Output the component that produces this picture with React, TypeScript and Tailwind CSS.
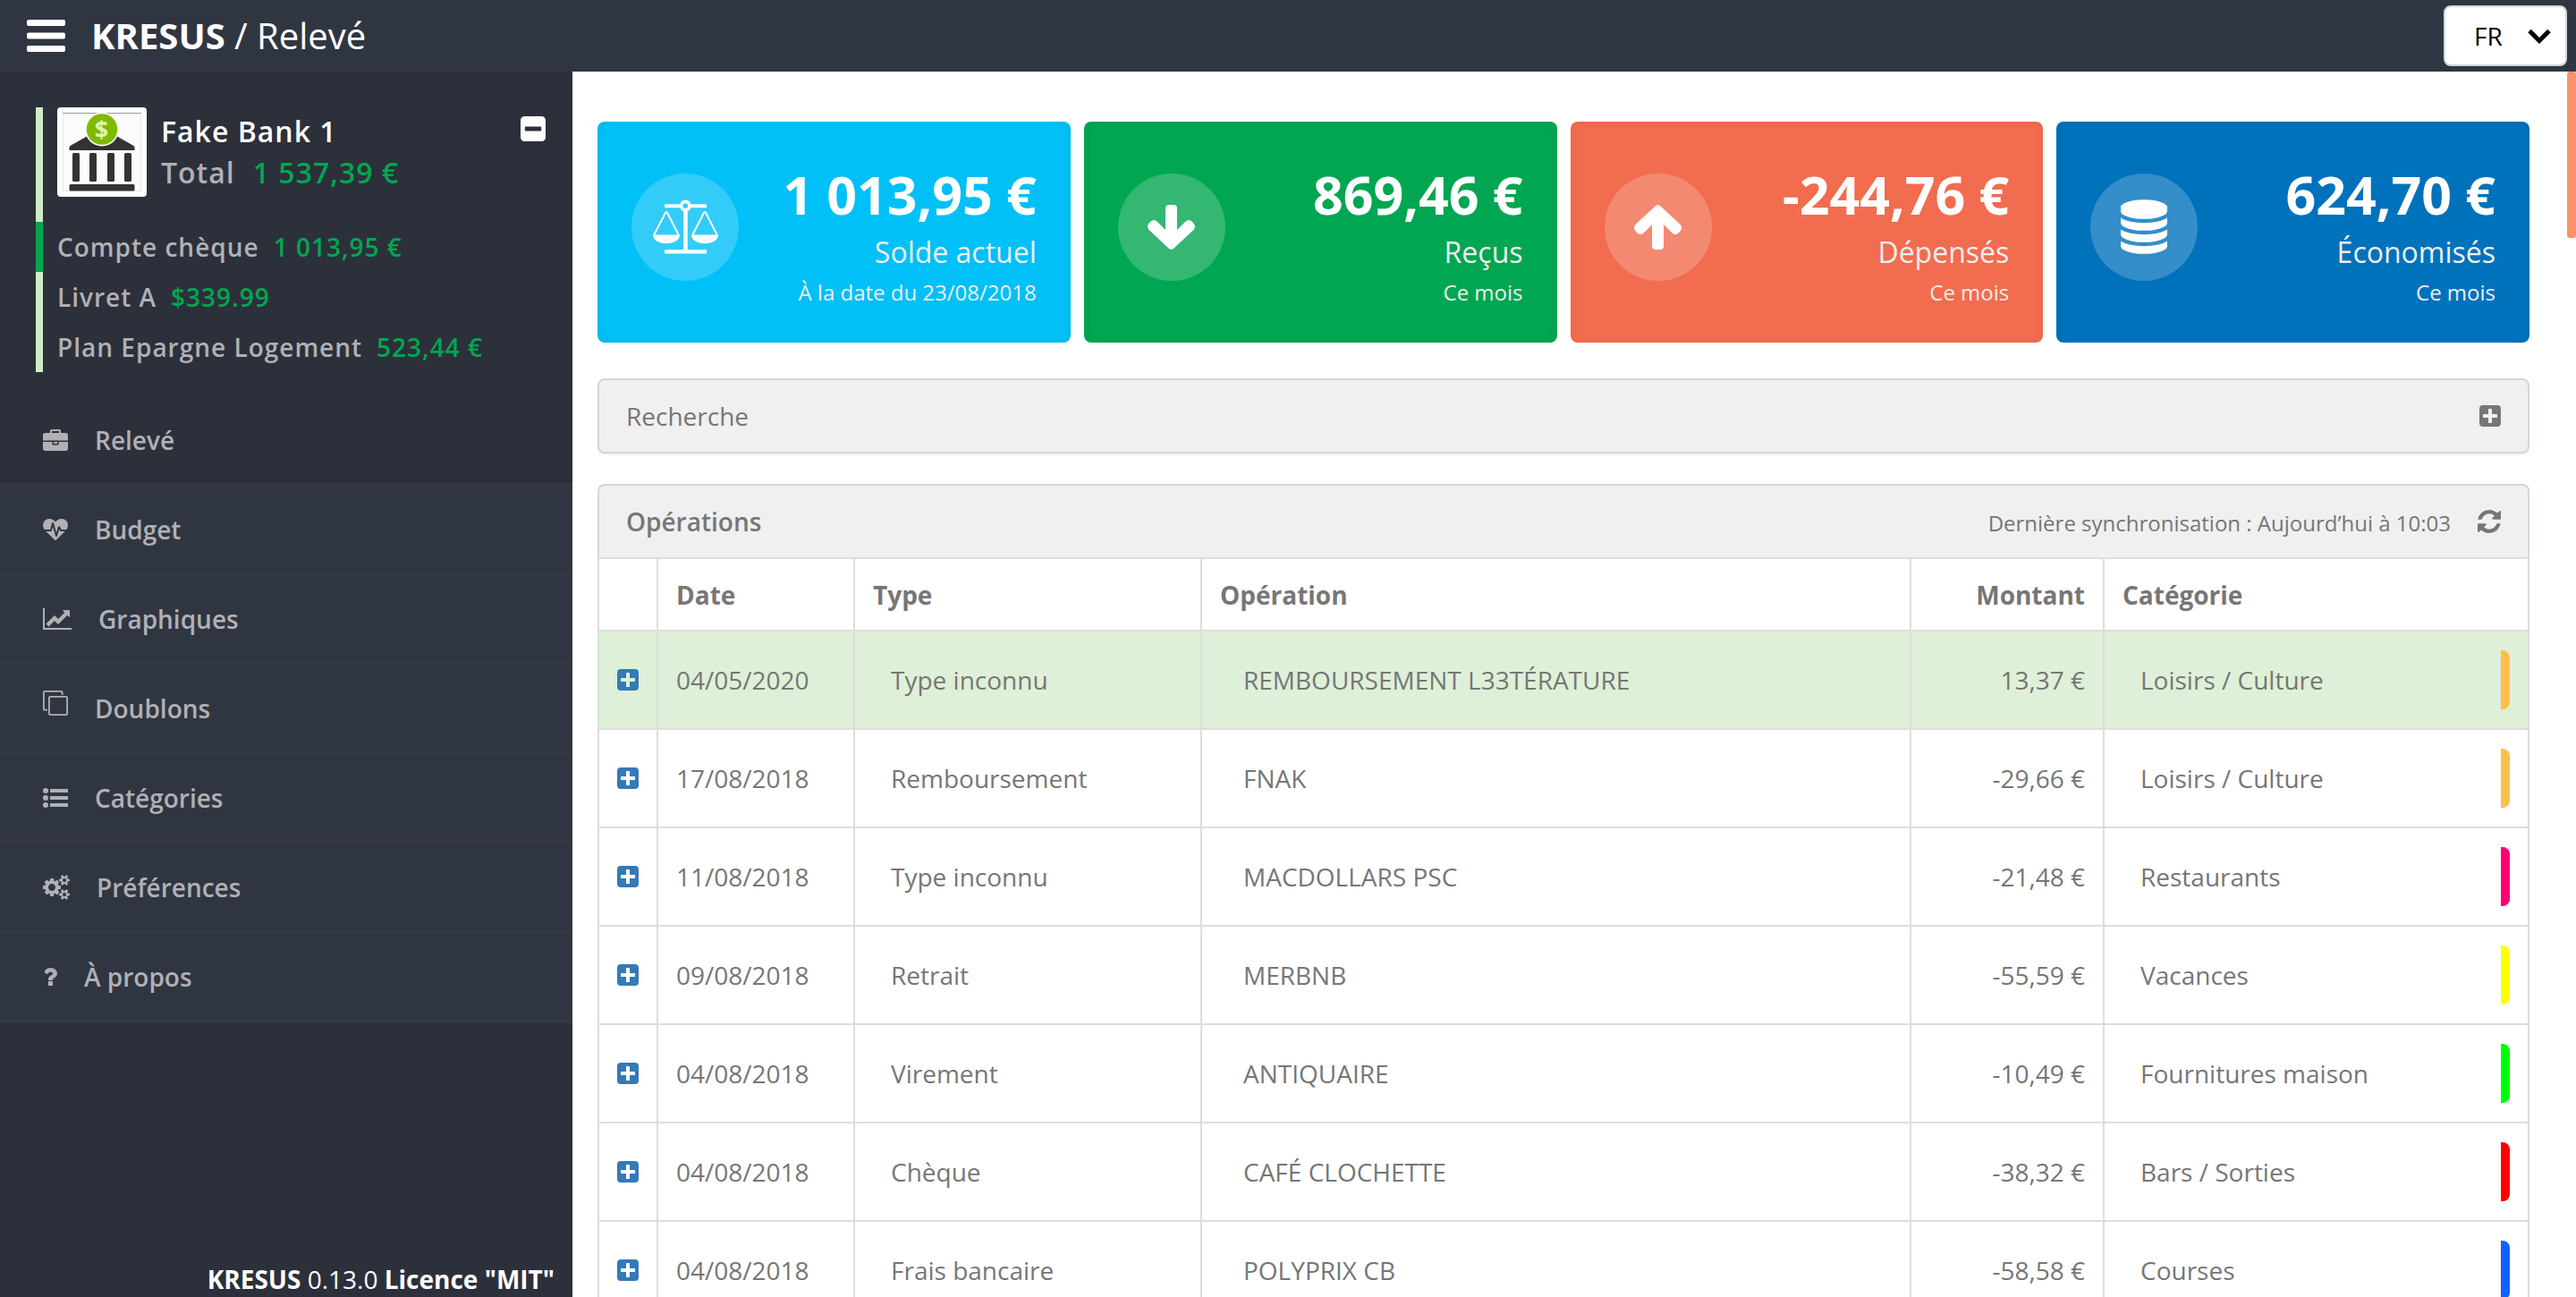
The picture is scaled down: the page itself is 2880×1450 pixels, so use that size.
import React from "react";

type SvgProps = { className?: string };

/* ---------- Icons ---------- */

const BriefcaseIcon = ({ className }: SvgProps) => (
  <svg viewBox="0 0 1792 1536" className={className} fill="currentColor" aria-hidden="true">
    <path d="M640 256h512v-128h-512v128zm1152 640v480q0 66-47 113t-113 47h-1472q-66 0-113-47t-47-113v-480h672v160q0 26 19 45t45 19h320q26 0 45-19t19-45v-160h672zm-768 0v128h-256v-128h256zm768-480v384h-1792v-384q0-66 47-113t113-47h352v-160q0-40 28-68t68-28h576q40 0 68 28t28 68v160h352q66 0 113 47t47 113z" />
  </svg>
);

const HeartbeatIcon = ({ className }: SvgProps) => (
  <svg viewBox="0 0 1792 1536" className={className} fill="currentColor" aria-hidden="true">
    <path d="M1280 896h305q-5 6-10 10.5t-9 7.5l-3 4-623 600q-18 18-44 18t-44-18l-624-602q-5-2-21-20h369q22 0 39.5-13.5t22.5-34.5l70-281 190 667q6 20 23 33t39 13q21 0 38-13t23-33l146-485 56 112q18 35 57 35zm512-428q0 145-103 300h-369l-111-221q-8-17-25.5-27t-36.5-8q-45 5-56 46l-129 430-196-686q-6-20-23.5-33t-39.5-13-39 13.5-22 34.5l-116 464h-423q-103-155-103-300 0-220 127-344t351-124q62 0 126.5 21.5t120 58 95.5 68.5 76 68q36-36 76-68t95.5-68.5 120-58 126.5-21.5q224 0 351 124t127 344z" />
  </svg>
);

const ChartIcon = ({ className }: SvgProps) => (
  <svg viewBox="0 128 2048 1536" className={className} fill="currentColor" aria-hidden="true">
    <path d="M2048 1536v128h-2048v-1536h128v1408h1920zm-128-1248v435q0 21-19.5 29.5t-35.5-7.5l-121-121-633 633q-10 10-23 10t-23-10l-233-233-416 416-192-192 585-585q10-10 23-10t23 10l233 233 464-464-121-121q-16-16-7.5-35.5t29.5-19.5h435q14 0 23 9t9 23z" />
  </svg>
);

const CloneIcon = ({ className }: SvgProps) => (
  <svg viewBox="0 0 28 40" className={className} fill="none" stroke="currentColor" strokeWidth="1.8" aria-hidden="true">
    <rect x="6.9" y="6.9" width="20.2" height="20.2" rx="1.2" />
    <path d="M5 21.6H2.1A1.2 1.2 0 0 1 .9 20.4V2.1A1.2 1.2 0 0 1 2.1.9h18.3a1.2 1.2 0 0 1 1.2 1.2V5" />
  </svg>
);

const ListIcon = ({ className }: SvgProps) => (
  <svg viewBox="0 0 28 24" className={className} fill="currentColor" aria-hidden="true">
    <circle cx="3" cy="4" r="3" />
    <circle cx="3" cy="12" r="3" />
    <circle cx="3" cy="20" r="3" />
    <rect x="8" y="2" width="20" height="4" rx="0.6" />
    <rect x="8" y="10" width="20" height="4" rx="0.6" />
    <rect x="8" y="18" width="20" height="4" rx="0.6" />
  </svg>
);

const CogsIcon = ({ className }: SvgProps) => (
  <svg viewBox="0 0 1920 1792" className={className} fill="currentColor" aria-hidden="true">
    <path d="M896 896q0-106-75-181t-181-75-181 75-75 181 75 181 181 75 181-75 75-181zm768 512q0-52-38-90t-90-38-90 38-38 90q0 53 37.5 90.5t90.5 37.5 90.5-37.5 37.5-90.5zm0-1024q0-52-38-90t-90-38-90 38-38 90q0 53 37.5 90.5t90.5 37.5 90.5-37.5 37.5-90.5zm-384 421v185q0 10-7 19.5t-16 10.5l-155 24q-11 35-32 76 34 48 90 115 7 11 7 20 0 12-7 19-23 30-82.5 89.5t-78.5 59.5q-11 0-21-7l-115-90q-37 19-77 31-11 108-23 155-7 24-30 24h-186q-11 0-20-7.5t-10-17.5l-23-153q-34-10-75-31l-118 89q-7 7-20 7-11 0-21-8-144-133-144-160 0-9 7-19 10-14 41-53t47-61q-23-44-35-82l-152-24q-10-1-17-9.5t-7-19.5v-185q0-10 7-19.5t16-10.5l155-24q11-35 32-76-34-48-90-115-7-11-7-20 0-12 7-20 22-30 82-89t79-59q11 0 21 7l115 90q34-18 77-32 11-108 23-154 7-24 30-24h186q11 0 20 7.5t10 17.5l23 153q34 10 75 31l118-89q8-7 20-7 11 0 21 8 144 133 144 160 0 8-7 19-12 16-42 54t-45 60q23 48 34 82l152 23q10 2 17 10.5t7 19.5zm640 533v140q0 16-149 31-12 27-30 52 51 113 51 138 0 4-4 7-122 71-124 71-8 0-46-47t-52-68q-20 2-30 2t-30-2q-14 21-52 68t-46 47q-2 0-124-71-4-3-4-7 0-25 51-138-18-25-30-52-149-15-149-31v-140q0-16 149-31 13-29 30-52-51-113-51-138 0-4 4-7 4-2 35-20t59-34 30-16q8 0 46 46.5t52 67.5q20-2 30-2t30 2q51-71 92-112l6-2q4 0 124 70 4 3 4 7 0 25-51 138 17 23 30 52 149 15 149 31zm0-1024v140q0 16-149 31-12 27-30 52 51 113 51 138 0 4-4 7-122 71-124 71-8 0-46-47t-52-68q-20 2-30 2t-30-2q-14 21-52 68t-46 47q-2 0-124-71-4-3-4-7 0-25 51-138-18-25-30-52-149-15-149-31v-140q0-16 149-31 13-29 30-52-51-113-51-138 0-4 4-7 4-2 35-20t59-34 30-16q8 0 46 46.5t52 67.5q20-2 30-2t30 2q51-71 92-112l6-2q4 0 124 70 4 3 4 7 0 25-51 138 17 23 30 52 149 15 149 31z" />
  </svg>
);

const QuestionIcon = ({ className }: SvgProps) => (
  <svg viewBox="384 256 1024 1280" className={className} fill="currentColor" aria-hidden="true">
    <path d="M1088 1256v240q0 16-12 28t-28 12h-240q-16 0-28-12t-12-28v-240q0-16 12-28t28-12h240q16 0 28 12t12 28zm316-600q0 54-15.5 101t-35 76.5-55 59.5-57.5 43.5-61 35.5q-41 23-68.5 65t-27.5 67q0 17-12 32.5t-28 15.5h-240q-15 0-25.5-18.5t-10.5-37.5v-45q0-83 65-156.5t143-108.5q59-27 84-56t25-76q0-42-46.5-74t-107.5-32q-65 0-108 29-35 25-107 115-13 16-31 16-12 0-25-8l-164-125q-13-10-15.5-25t5.5-28q160-266 464-266 80 0 161 31t146 83 106 127.5 41 158.5z" />
  </svg>
);

const BalanceIcon = ({ className }: SvgProps) => (
  <svg viewBox="84 108 219 182" className={className} fill="currentColor" aria-hidden="true">
    <path fillRule="evenodd" d="M193 109a19 19 0 0 1 18 14h51a2 2 0 0 1 2 2v8a2 2 0 0 1-2 2h-51a19 19 0 0 1-11 12v129h62a2 2 0 0 1 2 2v9a2 2 0 0 1-2 2H125a2 2 0 0 1-2-2v-9a2 2 0 0 1 2-2h61V147a19 19 0 0 1-11-12h-50a2 2 0 0 1-2-2v-8a2 2 0 0 1 2-2h50a19 19 0 0 1 18-14zM193 120a8.500 8.500 0 1 0 0 17a8.500 8.500 0 0 0 0-17z" />
    <path d="M84 226h90c0 18-20 29-45 29s-45-11-45-29zM213 226h90c0 18-20 29-45 29s-45-11-45-29z" />
    <path d="M88 226l38-74q3-4 6 0l38 74M217 226l38-74q3-4 6 0l38 74" fill="none" stroke="currentColor" strokeWidth="6" />
  </svg>
);

const ArrowDownIcon = ({ className }: SvgProps) => (
  <svg viewBox="0 0 53 50" className={className} fill="currentColor" aria-hidden="true">
    <path d="M20 4q0-4 4-4h5q4 0 4 4v24l9.500-9.500q3.500-3 7 0l2 2.300q3 3.500 0 7.200l-22 20.500q-3 3-6 0l-22-20.500q-3-3.700 0-7.200l2-2.300q3.500-3 7 0l9.500 9.500z" />
  </svg>
);

const ArrowUpIcon = ({ className }: SvgProps) => (
  <svg viewBox="0 0 53 50" className={className} fill="currentColor" aria-hidden="true">
    <path d="M20 46q0 4 4 4h5q4 0 4-4v-24l9.500 9.500q3.500 3 7 0l2-2.300q3-3.500 0-7.200l-22-20.500q-3-3-6 0l-22 20.500q-3 3.700 0 7.200l2 2.300q3.500 3 7 0l9.500-9.500z" />
  </svg>
);

const DatabaseIcon = ({ className }: SvgProps) => (
  <svg viewBox="128 0 1536 1792" className={className} fill="currentColor" aria-hidden="true">
    <path d="M896 768q237 0 443-43t325-127v170q0 69-103 128t-280 93.500-385 34.500-385-34.500-280-93.500-103-128v-170q119 84 325 127t443 43zm0 768q237 0 443-43t325-127v170q0 69-103 128t-280 93.500-385 34.500-385-34.500-280-93.500-103-128v-170q119 84 325 127t443 43zm0-384q237 0 443-43t325-127v170q0 69-103 128t-280 93.500-385 34.500-385-34.500-280-93.500-103-128v-170q119 84 325 127t443 43zm0-1152q208 0 385 34.500t280 93.500 103 128v128q0 69-103 128t-280 93.500-385 34.500-385-34.500-280-93.500-103-128v-128q0-69 103-128t280-93.500 385-34.500z" />
  </svg>
);

const PlusSquareIcon = ({ className }: SvgProps) => (
  <svg viewBox="0 0 24 24" className={className} fill="currentColor" aria-hidden="true">
    <path fillRule="evenodd" d="M4 0h16a4 4 0 0 1 4 4v16a4 4 0 0 1-4 4H4a4 4 0 0 1-4-4V4a4 4 0 0 1 4-4zM10.600 4a.6.6 0 0 0-.6.6V10H4.600a.6.6 0 0 0-.6.6v2.800a.6.6 0 0 0 .6.6H10v5.400a.6.6 0 0 0 .6.6h2.800a.6.6 0 0 0 .6-.6V14h5.400a.6.6 0 0 0 .6-.6v-2.800a.6.6 0 0 0-.6-.6H14V4.600a.6.6 0 0 0-.6-.6z" />
  </svg>
);

const MinusSquareIcon = ({ className }: SvgProps) => (
  <svg viewBox="0 0 28 28" className={className} fill="currentColor" aria-hidden="true">
    <path fillRule="evenodd" d="M4.500 0h19A4.500 4.500 0 0 1 28 4.500v19a4.500 4.500 0 0 1-4.500 4.500h-19A4.500 4.500 0 0 1 0 23.500v-19A4.500 4.500 0 0 1 4.500 0zM5.600 11.600a.8.8 0 0 0-.8.8v3.200a.8.8 0 0 0 .8.8h16.800a.8.8 0 0 0 .8-.8v-3.200a.8.8 0 0 0-.8-.8z" />
  </svg>
);

const RefreshIcon = ({ className }: SvgProps) => (
  <svg viewBox="128 128 1536 1536" className={className} fill="currentColor" aria-hidden="true">
    <path d="M1639 1056q0 5-1 7-64 268-268 434.500t-478 166.500q-146 0-282.500-55t-243.500-157l-129 129q-19 19-45 19t-45-19-19-45v-448q0-26 19-45t45-19h448q26 0 45 19t19 45-19 45l-137 137q71 66 161 102t187 36q134 0 250-65t186-179q11-17 53-117 8-23 30-23h192q13 0 22.500 9.500t9.500 22.500zm25-800v448q0 26-19 45t-45 19h-448q-26 0-45-19t-19-45 19-45l138-138q-148-137-349-137-134 0-250 65t-186 179q-11 17-53 117-8 23-30 23h-199q-13 0-22.500-9.500t-9.500-22.500v-7q65-268 270-434.500t480-166.500q146 0 284 55.500t245 156.500l130-129q19-19 45-19t45 19 19 45z" />
  </svg>
);

const MenuIcon = ({ className }: SvgProps) => (
  <svg viewBox="0 0 43 36" className={className} fill="currentColor" aria-hidden="true">
    <rect width="43" height="7" rx="2" />
    <rect y="14.500" width="43" height="7" rx="2" />
    <rect y="29" width="43" height="7" rx="2" />
  </svg>
);

const BankLogo = ({ className }: SvgProps) => (
  <svg viewBox="0 0 100 100" className={className} role="img" aria-label="Fake Bank 1">
    <rect width="100" height="100" rx="4" fill="#fff" />
    <rect x="6.500" y="6.500" width="87" height="87" fill="#fcfcfc" stroke="#e3e5e6" />
    <path d="M6 6.500h88" stroke="#9a9a9a" />
    <path d="M33 32.500L14.500 43q-2 2-1 5h73q1-3-1-5L67 32.500z" fill="#333" />
    <rect x="17" y="51" width="8" height="32" rx="1.500" fill="#333" />
    <rect x="36" y="51" width="8" height="32" rx="1.500" fill="#333" />
    <rect x="56" y="51" width="8" height="32" rx="1.500" fill="#333" />
    <rect x="75" y="51" width="8" height="32" rx="1.500" fill="#333" />
    <rect x="13.500" y="86" width="73" height="7.500" rx="1.500" fill="#333" />
    <circle cx="50" cy="24.500" r="19" fill="#fcfcfc" />
    <circle cx="50" cy="24.500" r="17.300" fill="#7fba00" />
    <text x="50" y="34" textAnchor="middle" fontSize="27" fontWeight="700" fontFamily="Open Sans, sans-serif" fill="#dff2b4">
      $
    </text>
  </svg>
);

/* ---------- Data ---------- */

const accounts = [
  { name: "Compte chèque", amount: "1 013,95 €", active: true },
  { name: "Livret A", amount: "$339.99", active: false },
  { name: "Plan Epargne Logement", amount: "523,44 €", active: false },
];

const navItems = [
  { label: "Relevé", icon: <BriefcaseIcon className="h-[24px] w-[28px]" />, active: true },
  { label: "Budget", icon: <HeartbeatIcon className="h-[24px] w-[28px]" />, active: false },
  { label: "Graphiques", icon: <ChartIcon className="h-[24px] w-[32px]" />, active: false },
  { label: "Doublons", icon: <CloneIcon className="h-[40px] w-[28px]" />, active: false },
  { label: "Catégories", icon: <ListIcon className="h-[24px] w-[28px]" />, active: false },
  { label: "Préférences", icon: <CogsIcon className="h-[28px] w-[30px]" />, active: false },
  { label: "À propos", icon: <QuestionIcon className="h-[20px] w-[16px]" />, active: false },
];

const cards = [
  {
    amount: "1 013,95 €",
    label: "Solde actuel",
    note: "À la date du 23/08/2018",
    color: "bg-[#00c0f7]",
    icon: <BalanceIcon className="h-[61px] w-[73px]" />,
  },
  {
    amount: "869,46 €",
    label: "Reçus",
    note: "Ce mois",
    color: "bg-[#00a651]",
    icon: <ArrowDownIcon className="h-[50px] w-[53px]" />,
  },
  {
    amount: "-244,76 €",
    label: "Dépensés",
    note: "Ce mois",
    color: "bg-[#f26c4f]",
    icon: <ArrowUpIcon className="h-[50px] w-[53px]" />,
  },
  {
    amount: "624,70 €",
    label: "Économisés",
    note: "Ce mois",
    color: "bg-[#0072bc]",
    icon: <DatabaseIcon className="h-[61px] w-[52px]" />,
  },
];

const operations = [
  { date: "04/05/2020", type: "Type inconnu", title: "REMBOURSEMENT L33TÉRATURE", amount: "13,37 €", category: "Loisirs / Culture", color: "border-[#ffbf4c]", income: true },
  { date: "17/08/2018", type: "Remboursement", title: "FNAK", amount: "-29,66 €", category: "Loisirs / Culture", color: "border-[#ffbf4c]", income: false },
  { date: "11/08/2018", type: "Type inconnu", title: "MACDOLLARS PSC", amount: "-21,48 €", category: "Restaurants", color: "border-[#ff0073]", income: false },
  { date: "09/08/2018", type: "Retrait", title: "MERBNB", amount: "-55,59 €", category: "Vacances", color: "border-[#ffff00]", income: false },
  { date: "04/08/2018", type: "Virement", title: "ANTIQUAIRE", amount: "-10,49 €", category: "Fournitures maison", color: "border-[#00ff00]", income: false },
  { date: "04/08/2018", type: "Chèque", title: "CAFÉ CLOCHETTE", amount: "-38,32 €", category: "Bars / Sorties", color: "border-[#ff0000]", income: false },
  { date: "04/08/2018", type: "Frais bancaire", title: "POLYPRIX CB", amount: "-58,58 €", category: "Courses", color: "border-[#0f62ff]", income: false },
];

/* ---------- Layout ---------- */

function TopBar() {
  return (
    <header className="flex h-[80px] shrink-0 items-center bg-[#303641] pl-[30px] pr-[10px] text-white">
      <button type="button" aria-label="Menu" className="mr-[29px]">
        <MenuIcon className="h-[36px] w-[43px]" />
      </button>
      <h1 className="flex-1 text-[40px] leading-[56px]">
        <a href="#accueil" className="font-bold">
          KRESUS
        </a>{" "}
        / Relevé
      </h1>
      <div className="relative">
        <select
          aria-label="Langue"
          className="h-[68px] w-[138px] appearance-none rounded-[8px] border-2 border-[#cfd8dc] bg-white pl-[32px] text-[28px] text-black"
        >
          <option>FR</option>
        </select>
        <svg viewBox="0 0 26 17" className="pointer-events-none absolute right-[18px] top-[26px] h-[17px] w-[26px]" fill="none" stroke="#000" strokeWidth="5" aria-hidden="true">
          <path d="M2 2.500l11 11 11-11" />
        </svg>
      </div>
    </header>
  );
}

function BankSummary() {
  return (
    <div className="pl-[40px] pr-[30px] pt-[40px] font-semibold tracking-[1px] text-[#b0b1b5]">
      <div className="flex h-[128px] items-start border-l-8 border-[#d0ecc8] pl-[16px]">
        <BankLogo className="h-[100px] w-[100px]" />
        <div className="ml-[16px] flex-1 pt-[4px] text-[32px] leading-[46px]">
          <p className="text-white">Fake Bank 1</p>
          <p className="flex gap-[20px]">
            <span>Total</span>
            <span className="text-[#00a651]">1 537,39 €</span>
          </p>
        </div>
        <button type="button" aria-label="Replier" className="mt-[10px] text-white">
          <MinusSquareIcon className="h-[28px] w-[28px]" />
        </button>
      </div>
      <ul>
        {accounts.map((account) => (
          <li
            key={account.name}
            className={`border-l-8 pl-[16px] text-[28px] leading-[56px] ${account.active ? "border-[#00a651]" : "border-[#d0ecc8]"}`}
          >
            <a href="#compte" className="flex gap-[16px]">
              <span>{account.name}</span>
              <span className="text-[#00a651]">{account.amount}</span>
            </a>
          </li>
        ))}
      </ul>
    </div>
  );
}

function Sidebar() {
  return (
    <aside className="flex w-[640px] shrink-0 flex-col bg-[#2c303b]">
      <BankSummary />
      <nav className="mt-[28px]">
        <ul>
          {navItems.map((item) => (
            <li key={item.label}>
              <a
                href="#section"
                className={`flex h-[100px] items-center gap-[30px] border-b-4 border-[#343944] pl-[48px] text-[28px] font-semibold text-[#b0b1b5] ${item.active ? "" : "bg-[#303641]"}`}
              >
                {item.icon}
                <span>{item.label}</span>
              </a>
            </li>
          ))}
        </ul>
      </nav>
      <p className="mt-auto pr-[20px] text-right text-[28px] leading-[40px] text-white">
        <a href="#kresus" className="font-bold">KRESUS</a> 0.13.0{" "}
        <a href="#licence" className="font-bold">Licence "MIT"</a>
      </p>
    </aside>
  );
}

function SummaryCards() {
  return (
    <ul className="grid grid-cols-4 gap-[15px]">
      {cards.map((card) => (
        <li
          key={card.label}
          className={`flex h-[247px] items-center justify-between rounded-[8px] px-[38px] text-white shadow-[inset_0_0_12px_rgba(0,0,0,0.06)] ${card.color}`}
        >
          <span className="mb-[12px] flex h-[120px] w-[120px] items-center justify-center rounded-full bg-white/20">
            {card.icon}
          </span>
          <div className="pt-[4px] text-right text-[#eeeeee]">
            <p className="text-[59px] font-bold leading-[76px] text-white">{card.amount}</p>
            <p className="text-[32px] leading-[54px]">{card.label}</p>
            <p className="text-[24px] leading-[36px]">{card.note}</p>
          </div>
        </li>
      ))}
    </ul>
  );
}

function SearchPanel() {
  return (
    <section className="mt-[40px] flex h-[84px] items-center justify-between rounded-[8px] border-2 border-[#cfd8dc] bg-[#f0f0f0] pl-[30px] pr-[30px] text-[28px] shadow-[0_2px_2px_rgba(0,0,0,0.05)]">
      <h2>Recherche</h2>
      <button type="button" aria-label="Afficher la recherche">
        <PlusSquareIcon className="h-[24px] w-[24px]" />
      </button>
    </section>
  );
}

function OperationsPanel() {
  const th = "border-2 border-[#dddddd] px-[20px] font-bold";
  const td = "border-2 border-[#dddddd]";
  return (
    <section className="mt-[34px] text-[28px]">
      <div className="flex h-[82px] items-center rounded-t-[8px] border-2 border-b-0 border-[#cfd8dc] bg-[#f0f0f0] px-[30px]">
        <h2 className="flex-1 font-semibold">Opérations</h2>
        <span className="pt-[4px] text-[24px]">Dernière synchronisation : Aujourd’hui à 10:03</span>
        <button type="button" aria-label="Synchroniser" className="ml-[30px]">
          <RefreshIcon className="h-[26px] w-[26px]" />
        </button>
      </div>
      <table className="w-full table-fixed border-collapse text-left">
        <colgroup>
          <col className="w-[66px]" />
          <col className="w-[220px]" />
          <col className="w-[388px]" />
          <col />
          <col className="w-[216px]" />
          <col className="w-[475px]" />
        </colgroup>
        <thead>
          <tr className="h-[81px]">
            <th className={th} aria-label="Détails" />
            <th className={th}>Date</th>
            <th className={th}>Type</th>
            <th className={th}>Opération</th>
            <th className={`${th} text-right`}>Montant</th>
            <th className={th}>Catégorie</th>
          </tr>
        </thead>
        <tbody>
          {operations.map((op) => (
            <tr key={op.title} className={`h-[110px] ${op.income ? "bg-[#dff0d8]" : ""}`}>
              <td className={`${td} text-center`}>
                <button type="button" aria-label="Détails de l'opération" className="block w-full text-[#337ab7]">
                  <PlusSquareIcon className="mx-auto h-[24px] w-[24px]" />
                </button>
              </td>
              <td className={`${td} pl-[20px]`}>{op.date}</td>
              <td className={`${td} pl-[20px] pr-[20px]`}>
                <button type="button" className="h-[66px] w-full pl-[20px] text-left">
                  {op.type}
                </button>
              </td>
              <td className={`${td} pl-[20px] pr-[20px]`}>
                <button type="button" className="h-[66px] w-full pl-[26px] text-left">
                  {op.title}
                </button>
              </td>
              <td className={`${td} pr-[20px] text-right`}>{op.amount}</td>
              <td className={`${td} pl-[20px] pr-[20px]`}>
                <button type="button" className={`block h-[66px] w-full rounded-[8px] border-r-[10px] pl-[20px] text-left ${op.color}`}>
                  {op.category}
                </button>
              </td>
            </tr>
          ))}
        </tbody>
      </table>
    </section>
  );
}

export default function App() {
  return (
    <div className="flex h-screen flex-col overflow-hidden bg-white font-['Open_Sans',sans-serif] text-[28px] text-[#767676]">
      <TopBar />
      <div className="flex min-h-0 flex-1">
        <Sidebar />
        <main className="relative min-w-0 flex-1 overflow-hidden pb-[40px] pl-[28px] pr-[52px] pt-[56px]">
          <SummaryCards />
          <SearchPanel />
          <OperationsPanel />
          <div className="absolute right-0 top-0 h-[186px] w-[10px] rounded-[3px] bg-[#f7926b]" />
        </main>
      </div>
    </div>
  );
}
